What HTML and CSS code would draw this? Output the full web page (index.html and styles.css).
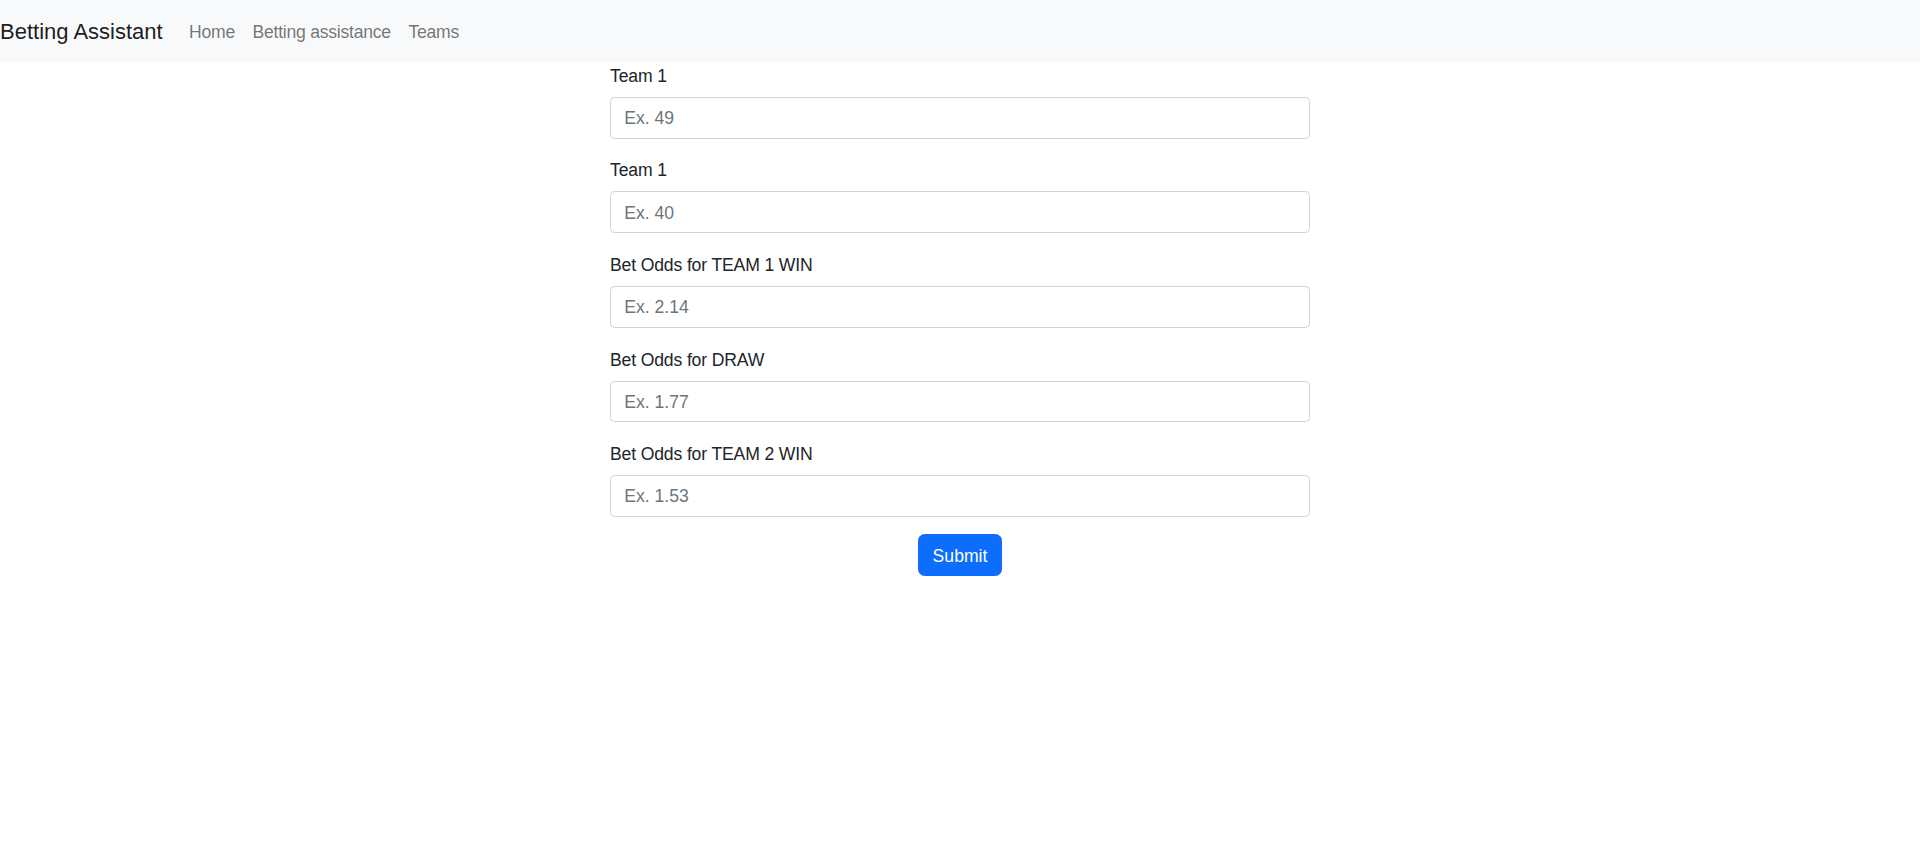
FILE: index.html
```html
<!DOCTYPE html>
<html lang="en">
<head>
<meta charset="utf-8">
<title>Betting Assistant</title>
<link rel="stylesheet" href="styles.css">
</head>
<body>
<nav class="navbar">
  <a class="brand" href="#">Betting Assistant</a>
  <ul class="nav">
    <li><a class="nav-link" href="#">Home</a></li>
    <li><a class="nav-link" href="#">Betting assistance</a></li>
    <li><a class="nav-link" href="#">Teams</a></li>
  </ul>
</nav>
<main class="container">
  <form class="form">
    <div class="group">
      <label class="label" for="t1">Team 1</label>
      <input class="input" id="t1" type="text" placeholder="Ex. 49">
    </div>
    <div class="group">
      <label class="label" for="t2">Team 1</label>
      <input class="input" id="t2" type="text" placeholder="Ex. 40">
    </div>
    <div class="group">
      <label class="label" for="o1">Bet Odds for TEAM 1 WIN</label>
      <input class="input" id="o1" type="text" placeholder="Ex. 2.14">
    </div>
    <div class="group">
      <label class="label" for="od">Bet Odds for DRAW</label>
      <input class="input" id="od" type="text" placeholder="Ex. 1.77">
    </div>
    <div class="group">
      <label class="label" for="o2">Bet Odds for TEAM 2 WIN</label>
      <input class="input" id="o2" type="text" placeholder="Ex. 1.53">
    </div>
    <div class="actions">
      <button class="btn" type="submit">Submit</button>
    </div>
  </form>
</main>
</body>
</html>
```
FILE: styles.css
```css
* { box-sizing: border-box; }
html, body {
  margin: 0;
  padding: 0;
  background: #fff;
  font-family: "Liberation Sans", Arial, sans-serif;
  color: #212529;
}
.navbar {
  display: flex;
  align-items: center;
  height: 61.6px;
  padding: 8.8px 0;
  background: #f8f9fa;
}
.brand {
  font-size: 22px;
  line-height: 33px;
  padding: 6.5px 0 4.5px;
  margin-right: 17.6px;
  color: rgba(0,0,0,0.9);
  text-decoration: none;
  white-space: nowrap;
}
.nav {
  display: flex;
  list-style: none;
  margin: 0;
  padding: 0;
}
.nav-link {
  display: block;
  padding: 10px 8.8px 7.6px;
  font-size: 17.6px;
  line-height: 26.4px;
  letter-spacing: -0.25px;
  color: rgba(0,0,0,0.55);
  text-decoration: none;
}
.container {
  width: 700px;
  margin: 0 auto;
}
.group {
  margin-bottom: 17.6px;
}
.label {
  display: block;
  font-size: 17.6px;
  line-height: 26.4px;
  letter-spacing: -0.15px;
  padding-top: 1.2px;
  margin-bottom: 7.6px;
  color: #212529;
}
.input {
  display: block;
  width: 100%;
  height: 41.8px;
  padding: 7.6px 13.2px 5.6px;
  font-family: inherit;
  font-size: 17.6px;
  line-height: 26.4px;
  color: #212529;
  background: #fff;
  border: 1px solid #ced4da;
  border-radius: 4.4px;
  outline: none;
}
.input::placeholder {
  color: #6c757d;
  opacity: 1;
}
.actions {
  text-align: center;
}
.btn {
  display: inline-block;
  height: 41.8px;
  padding: 7.2px 13.2px 6px;
  font-family: inherit;
  font-size: 17.6px;
  line-height: 26.4px;
  color: #fff;
  background: #0d6efd;
  border: 1px solid #0d6efd;
  border-radius: 6.6px;
  cursor: pointer;
}
```
